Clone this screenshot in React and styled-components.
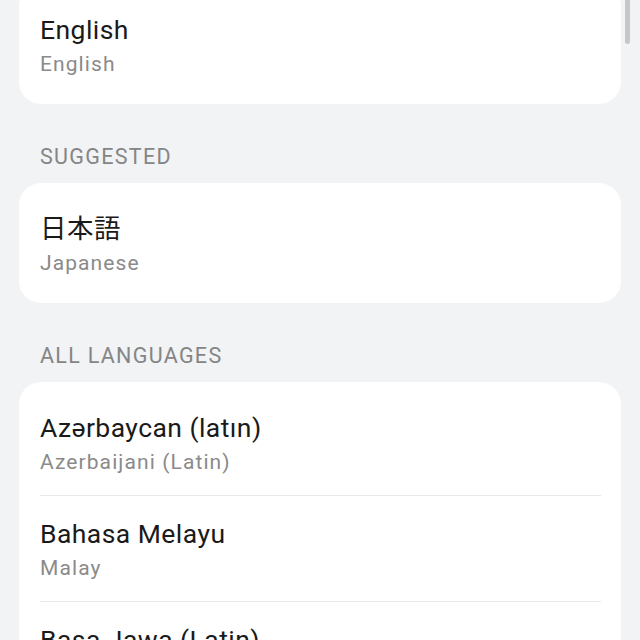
import React from 'react';
import styled, { createGlobalStyle } from 'styled-components';

const GlobalStyle = createGlobalStyle`
  html, body {
    margin: 0;
    padding: 0;
    background: #f1f3f5;
  }
  body {
    font-family: Roboto, "Noto Sans CJK JP", "Noto Sans", sans-serif;
    -webkit-font-smoothing: antialiased;
  }
`;

const Screen = styled.div`
  position: relative;
  width: 640px;
  height: 640px;
  overflow: hidden;
  background: #f1f3f5;
`;

const List = styled.div`
  display: flex;
  flex-direction: column;
  padding: 0 19px;
  margin-top: -16px;
`;

const Card = styled.div`
  background: #ffffff;
  border-radius: 22px;
  padding: 7px 0;
`;

const SectionLabel = styled.div`
  padding: 39px 21px 12px;
  font-size: 21.5px;
  line-height: 28px;
  color: #858585;
  letter-spacing: 1.3px;
`;

const Row = styled.div`
  margin: 0 20px 0 21px;
  padding: 21px 0 18px;
  display: flex;
  flex-direction: column;
  border-top: 1px solid ${({ $divider }) => ($divider ? '#e9e9ea' : 'transparent')};
`;

const Title = styled.div`
  font-size: 26.5px;
  line-height: 34px;
  letter-spacing: 0.45px;
  color: #1a1a1a;
`;

const Subtitle = styled.div`
  margin-top: 2px;
  font-size: 21px;
  line-height: 30px;
  letter-spacing: 1.1px;
  color: #8a8a8a;
`;

const ScrollThumb = styled.div`
  position: absolute;
  top: -6px;
  right: 10px;
  width: 5px;
  height: 50px;
  border-radius: 3px;
  background: #c6c7c9;
`;

const LanguageRow = ({ name, english, divider }) => (
  <Row $divider={divider}>
    <Title>{name}</Title>
    <Subtitle>{english}</Subtitle>
  </Row>
);

const allLanguages = [
  { name: 'Azərbaycan (latın)', english: 'Azerbaijani (Latin)' },
  { name: 'Bahasa Melayu', english: 'Malay' },
  { name: 'Basa Jawa (Latin)', english: 'Javanese (Latin)' },
];

export default function App() {
  return (
    <Screen>
      <GlobalStyle />
      <List>
        <Card>
          <LanguageRow name="English" english="English" />
        </Card>

        <SectionLabel>SUGGESTED</SectionLabel>
        <Card>
          <LanguageRow name="日本語" english="Japanese" />
        </Card>

        <SectionLabel>ALL LANGUAGES</SectionLabel>
        <Card>
          {allLanguages.map((lang, i) => (
            <LanguageRow
              key={lang.name}
              name={lang.name}
              english={lang.english}
              divider={i > 0}
            />
          ))}
        </Card>
      </List>
      <ScrollThumb />
    </Screen>
  );
}
